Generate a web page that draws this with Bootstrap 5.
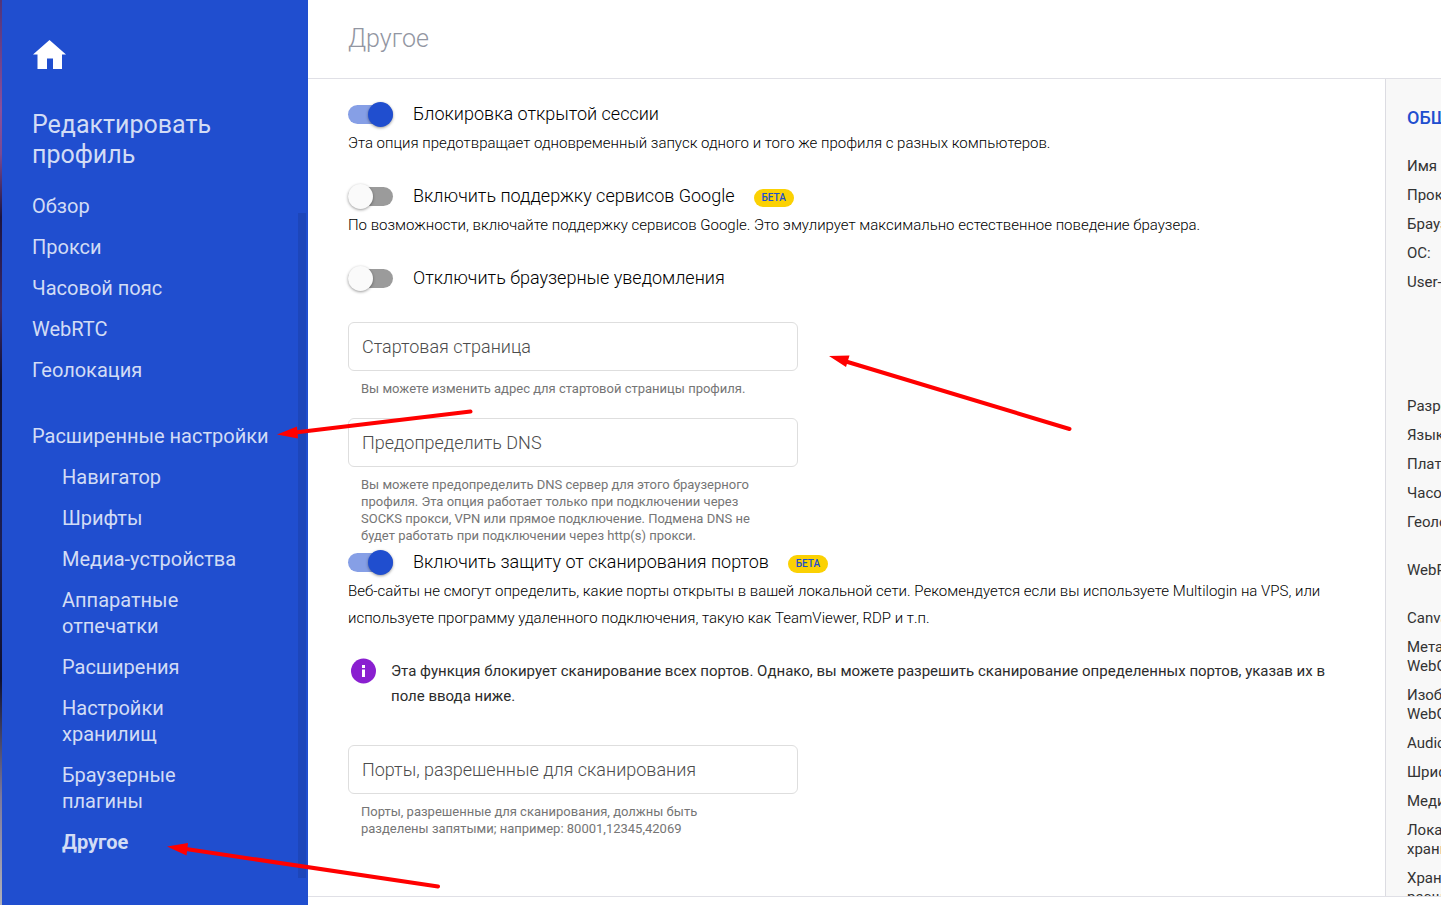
<!DOCTYPE html>
<html lang="ru">
<head>
<meta charset="utf-8">
<meta name="viewport" content="width=device-width, initial-scale=1">
<title>Редактировать профиль</title>
<link href="https://cdn.jsdelivr.net/npm/bootstrap@5.3.0/dist/css/bootstrap.min.css" rel="stylesheet">
<style>
  :root { --brand: #204ecf; --line: #e0e0e6; }
  body { font-family: Roboto, "Noto Sans", sans-serif; color: #212121; background: #fff; font-size: 15px; }
  a { color: inherit; text-decoration: none; }
  .desktop-edge { width: 2px; background: linear-gradient(#50347a, #8a4f9c 12%, #7a4a94 17%, #1c1440 24%, #3b2868 34%, #0f1238 42%, #1c1f55 60%, #0e1030 75%, #7b789c 88%, #b0b0b8); }
  .sidebar { width: 306px; background: var(--brand); color: #d2dcf5; padding: 33px 30px 0; }
  .sidebar h2 { font-size: 25px; line-height: 30px; font-weight: 400; margin: 33px 0 23px; }
  .side-menu { display: flex; flex-direction: column; gap: 15px; font-size: 20px; line-height: 26px; white-space: nowrap; }
  .side-group { margin-top: 25px; }
  .sub-menu { padding: 0 26px 0 30px; white-space: normal; }
  .side-scroll { width: 8px; top: 213px; bottom: 27px; right: 2px; background: #1d46ba; }
  .topbar { height: 79px; border-bottom: 1px solid var(--line); padding: 0 40px; }
  .topbar h1 { font-size: 25px; line-height: 30px; font-weight: 300; color: #9296a2; margin: 0; }
  .work { border-bottom: 1px solid var(--line); margin-bottom: 8px; }
  .settings { padding: 19px 40px 0; font-weight: 300; color: #000; }
  .switch-row { display: flex; align-items: center; height: 32px; font-size: 18px; }
  .switch-row label { padding-bottom: 2px; }
  .switch-row input { appearance: none; width: 45px; height: 19px; border-radius: 10px; background: #9b9b9b; margin: 0 20px 0 0; display: flex; align-items: center; flex: none; }
  .switch-row input::before { content: ""; width: 25px; height: 25px; flex: none; border-radius: 50%; background: #fafafa; box-shadow: 0 1px 3px rgba(0,0,0,.4); }
  .switch-row input:checked { background: #869fe6; justify-content: flex-end; }
  .switch-row input:checked::before { background: var(--brand); }
  .beta { font-size: 10px; line-height: 18px; font-weight: 500; color: var(--brand); background: #fbd103; border-radius: 9px; padding: 0 8px; margin: 3px 0 0 19px; }
  .note { line-height: 27px; margin: 0 0 23px; }
  .field { max-width: 450px; margin-top: 21px; }
  .field-first { margin-top: 28px; }
  .field-last { margin-top: 36px; }
  .field .form-control { height: 49px; font-family: inherit; font-size: 18px; font-weight: 300; padding: 0 13px 1px; border-color: #dedede; border-radius: 6px; }
  .field .form-control::placeholder { color: #4c4c4c; opacity: 1; }
  .hint { font-size: 13px; line-height: 17px; font-weight: 400; color: #757575; margin: 9px 0 0; padding: 0 36px 0 13px; }
  .after-hint { margin-top: 2px; }
  .info-row { margin-top: 27px; gap: 15px; font-weight: 400; color: #2c2c2c; }
  .info-text { line-height: 25px; }
  .summary { width: 56px; background: #f8f8f8; border-left: 1px solid #dcdce2; padding: 28px 0 0 21px; white-space: nowrap; color: #333; line-height: 19px; }
  .summary h3 { font-size: 18px; line-height: 22px; font-weight: 500; color: var(--brand); margin: 0 0 28px; }
  .summary li { margin-bottom: 10px; }
  .summary .two-line { min-height: 38px; }
  .summary .six-line { min-height: 114px; }
  .markup { left: 0; top: 0; pointer-events: none; }
</style>
<script src="https://cdn.jsdelivr.net/npm/bootstrap@5.3.0/dist/js/bootstrap.bundle.min.js"></script>
</head>
<body>
<div class="d-flex vh-100 overflow-hidden position-relative">
  <div class="desktop-edge flex-shrink-0"></div>
  <aside class="sidebar flex-shrink-0 position-relative">
    <a href="#" class="d-block" aria-label="Главная">
      <svg class="d-block" width="36" height="44" viewBox="0 0 36 44"><path fill="#fff" d="M17.500 7 34 21.500H30V36H21V25.500H15V36H5.500V21.500H1Z"/></svg>
    </a>
    <h2>Редактировать профиль</h2>
    <nav class="side-menu">
      <a href="#">Обзор</a>
      <a href="#">Прокси</a>
      <a href="#">Часовой пояс</a>
      <a href="#">WebRTC</a>
      <a href="#">Геолокация</a>
      <a href="#" class="side-group">Расширенные настройки</a>
      <div class="side-menu sub-menu">
        <a href="#">Навигатор</a>
        <a href="#">Шрифты</a>
        <a href="#">Медиа-устройства</a>
        <a href="#">Аппаратные отпечатки</a>
        <a href="#">Расширения</a>
        <a href="#">Настройки хранилищ</a>
        <a href="#">Браузерные плагины</a>
        <a href="#" class="fw-bold" aria-current="page">Другое</a>
      </div>
    </nav>
    <div class="side-scroll position-absolute"></div>
  </aside>

  <div class="d-flex flex-column flex-grow-1 overflow-hidden">
    <header class="topbar d-flex align-items-center flex-shrink-0"><h1>Другое</h1></header>
    <div class="work d-flex flex-grow-1 overflow-hidden">
      <main class="settings flex-grow-1">
        <div class="switch-row"><input type="checkbox" role="switch" id="lock" checked><label for="lock">Блокировка открытой сессии</label></div>
        <p class="note">Эта опция предотвращает одновременный запуск одного и того же профиля с разных компьютеров.</p>

        <div class="switch-row"><input type="checkbox" role="switch" id="google"><label for="google">Включить поддержку сервисов Google</label><span class="beta">БЕТА</span></div>
        <p class="note">По возможности, включайте поддержку сервисов Google. Это эмулирует максимально естественное поведение браузера.</p>

        <div class="switch-row"><input type="checkbox" role="switch" id="notify"><label for="notify">Отключить браузерные уведомления</label></div>

        <div class="field field-first">
          <input class="form-control" type="text" placeholder="Стартовая страница" aria-label="Стартовая страница" aria-describedby="h1">
          <p class="hint" id="h1">Вы можете изменить адрес для стартовой страницы профиля.</p>
        </div>
        <div class="field">
          <input class="form-control" type="text" placeholder="Предопределить DNS" aria-label="Предопределить DNS" aria-describedby="h2">
          <p class="hint" id="h2">Вы можете предопределить DNS сервер для этого браузерного профиля. Эта опция работает только при подключении через SOCKS прокси, VPN или прямое подключение. Подмена DNS не будет работать при подключении через http(s) прокси.</p>
        </div>

        <div class="switch-row after-hint"><input type="checkbox" role="switch" id="ports" checked><label for="ports">Включить защиту от сканирования портов</label><span class="beta">БЕТА</span></div>
        <p class="note mb-0">Веб-сайты не смогут определить, какие порты открыты в вашей локальной сети. Рекомендуется если вы используете Multilogin на VPS, или используете программу удаленного подключения, такую как TeamViewer, RDP и т.п.</p>

        <div class="info-row d-flex align-items-start">
          <svg class="flex-shrink-0 ms-1" width="24" height="26" viewBox="0 0 24 26" overflow="visible"><circle cx="11.500" cy="12" r="12.500" fill="#8a1fd0"/><path fill="#fff" d="M10 6h3v3h-3zM10 10.500h3V18h-3z"/></svg>
          <p class="info-text mb-0">Эта функция блокирует сканирование всех портов. Однако, вы можете разрешить сканирование определенных портов, указав их в поле ввода ниже.</p>
        </div>

        <div class="field field-last">
          <input class="form-control" type="text" placeholder="Порты, разрешенные для сканирования" aria-label="Порты, разрешенные для сканирования" aria-describedby="h3">
          <p class="hint" id="h3">Порты, разрешенные для сканирования, должны быть разделены запятыми; например: 80001,12345,42069</p>
        </div>
      </main>

      <aside class="summary flex-shrink-0 overflow-hidden">
        <h3>ОБЩАЯ</h3>
        <ul class="list-unstyled mb-0">
          <li>Имя</li>
          <li>Прокси:</li>
          <li>Браузер:</li>
          <li>ОС:</li>
          <li class="six-line">User-agent:</li>
          <li>Разрешение:</li>
          <li>Языки:</li>
          <li>Платформа:</li>
          <li>Часовой пояс:</li>
          <li class="two-line">Геолокация:</li>
          <li class="two-line">WebRTC:</li>
          <li>Canvas:</li>
          <li>Метаданные<br>WebGL:</li>
          <li>Изображение<br>WebGL:</li>
          <li>AudioContext:</li>
          <li>Шрифты:</li>
          <li>Медиа-устройства:</li>
          <li>Локальное<br>хранилище:</li>
          <li>Хранилище<br>расширений:</li>
        </ul>
      </aside>
    </div>
  </div>

  <svg class="markup position-absolute" width="1100" height="900" viewBox="0 0 1100 900" aria-hidden="true">
    <g stroke="#f00" stroke-width="4" stroke-linecap="round"><path d="M295 432.500 470.500 411.500M846 361.500 1069.500 429M186 849 438 886.500"/></g>
    <path fill="#f00" d="M277 434.500 297 426.500 298 438.500ZM829 356 849.500 355.500 846 367ZM167 846.500 188 843 186.500 855.500Z"/>
  </svg>
</div>
</body>
</html>
